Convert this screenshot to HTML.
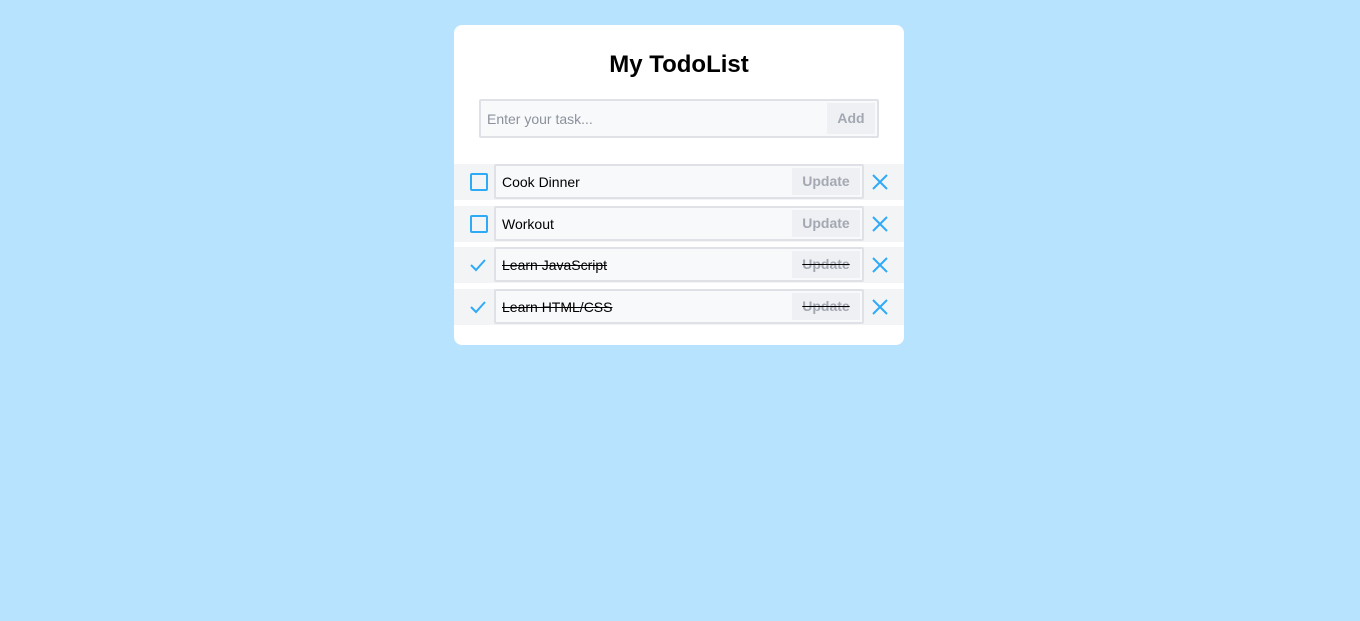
<!DOCTYPE html>
<html><head><style>
body{margin:0;background:#b7e3fe;width:1360px;height:621px;font-family:"Liberation Sans",sans-serif;position:relative;overflow:hidden}
.card{position:absolute;left:454px;top:25px;width:450px;height:320px;background:#fff;border-radius:8px}
h1{position:absolute;left:0;right:0;top:26px;margin:0;text-align:center;font-size:24px;font-weight:bold;color:#000}
.inp{position:absolute;left:25px;top:74px;width:396px;height:35px;border:2px solid #dfe1e6;background:#f8f9fb;border-radius:2px}
.inp span{position:absolute;left:6px;top:10px;font-size:14px;color:#8c919b}
.add{position:absolute;right:2px;top:2px;width:48px;height:31px;background:#eff0f3;color:#a3a8b2;font-size:14px;font-weight:bold;text-align:center;line-height:31px}
.row{position:absolute;left:0;width:450px;height:36px;background:#f3f4f6}
.cb{position:absolute;left:16px;top:9px;width:14px;height:14px;border:2px solid #2eaaf7;border-radius:2px}
.fld{position:absolute;left:40px;top:0;width:366px;height:31px;border:2px solid #dfe1e6;background:#f8f9fb;border-radius:2px}
.fld span{position:absolute;left:6px;top:8px;font-size:14px;color:#000}
.up{position:absolute;right:2px;top:2px;width:68px;height:27px;background:#eff0f3;color:#a3a8b2;font-size:14px;font-weight:bold;text-align:center;line-height:27px}
.done span,.done .up{text-decoration:line-through;text-decoration-color:#000}
.x{position:absolute;left:418px;top:10px}
.ck{position:absolute;left:16px;top:11px}
</style></head><body>
<div class="card">
<h1>My TodoList</h1>
<div class="inp"><span>Enter your task...</span><div class="add">Add</div></div>
<div class="row" style="top:139px"><div class="cb"></div><div class="fld"><span>Cook Dinner</span><div class="up">Update</div></div><svg class="x" width="16" height="16"><path d="M1 1L15 15M15 1L1 15" stroke="#2eaaf7" stroke-width="2"/></svg></div>
<div class="row" style="top:181px"><div class="cb"></div><div class="fld"><span>Workout</span><div class="up">Update</div></div><svg class="x" width="16" height="16"><path d="M1 1L15 15M15 1L1 15" stroke="#2eaaf7" stroke-width="2"/></svg></div>
<div class="row done" style="top:222px"><svg class="ck" width="16" height="14"><path d="M1 7L6 12L15 2" stroke="#2eaaf7" stroke-width="2" fill="none"/></svg><div class="fld"><span>Learn JavaScript</span><div class="up">Update</div></div><svg class="x" width="16" height="16"><path d="M1 1L15 15M15 1L1 15" stroke="#2eaaf7" stroke-width="2"/></svg></div>
<div class="row done" style="top:264px"><svg class="ck" width="16" height="14"><path d="M1 7L6 12L15 2" stroke="#2eaaf7" stroke-width="2" fill="none"/></svg><div class="fld"><span>Learn HTML/CSS</span><div class="up">Update</div></div><svg class="x" width="16" height="16"><path d="M1 1L15 15M15 1L1 15" stroke="#2eaaf7" stroke-width="2"/></svg></div>
</div>
</body></html>
